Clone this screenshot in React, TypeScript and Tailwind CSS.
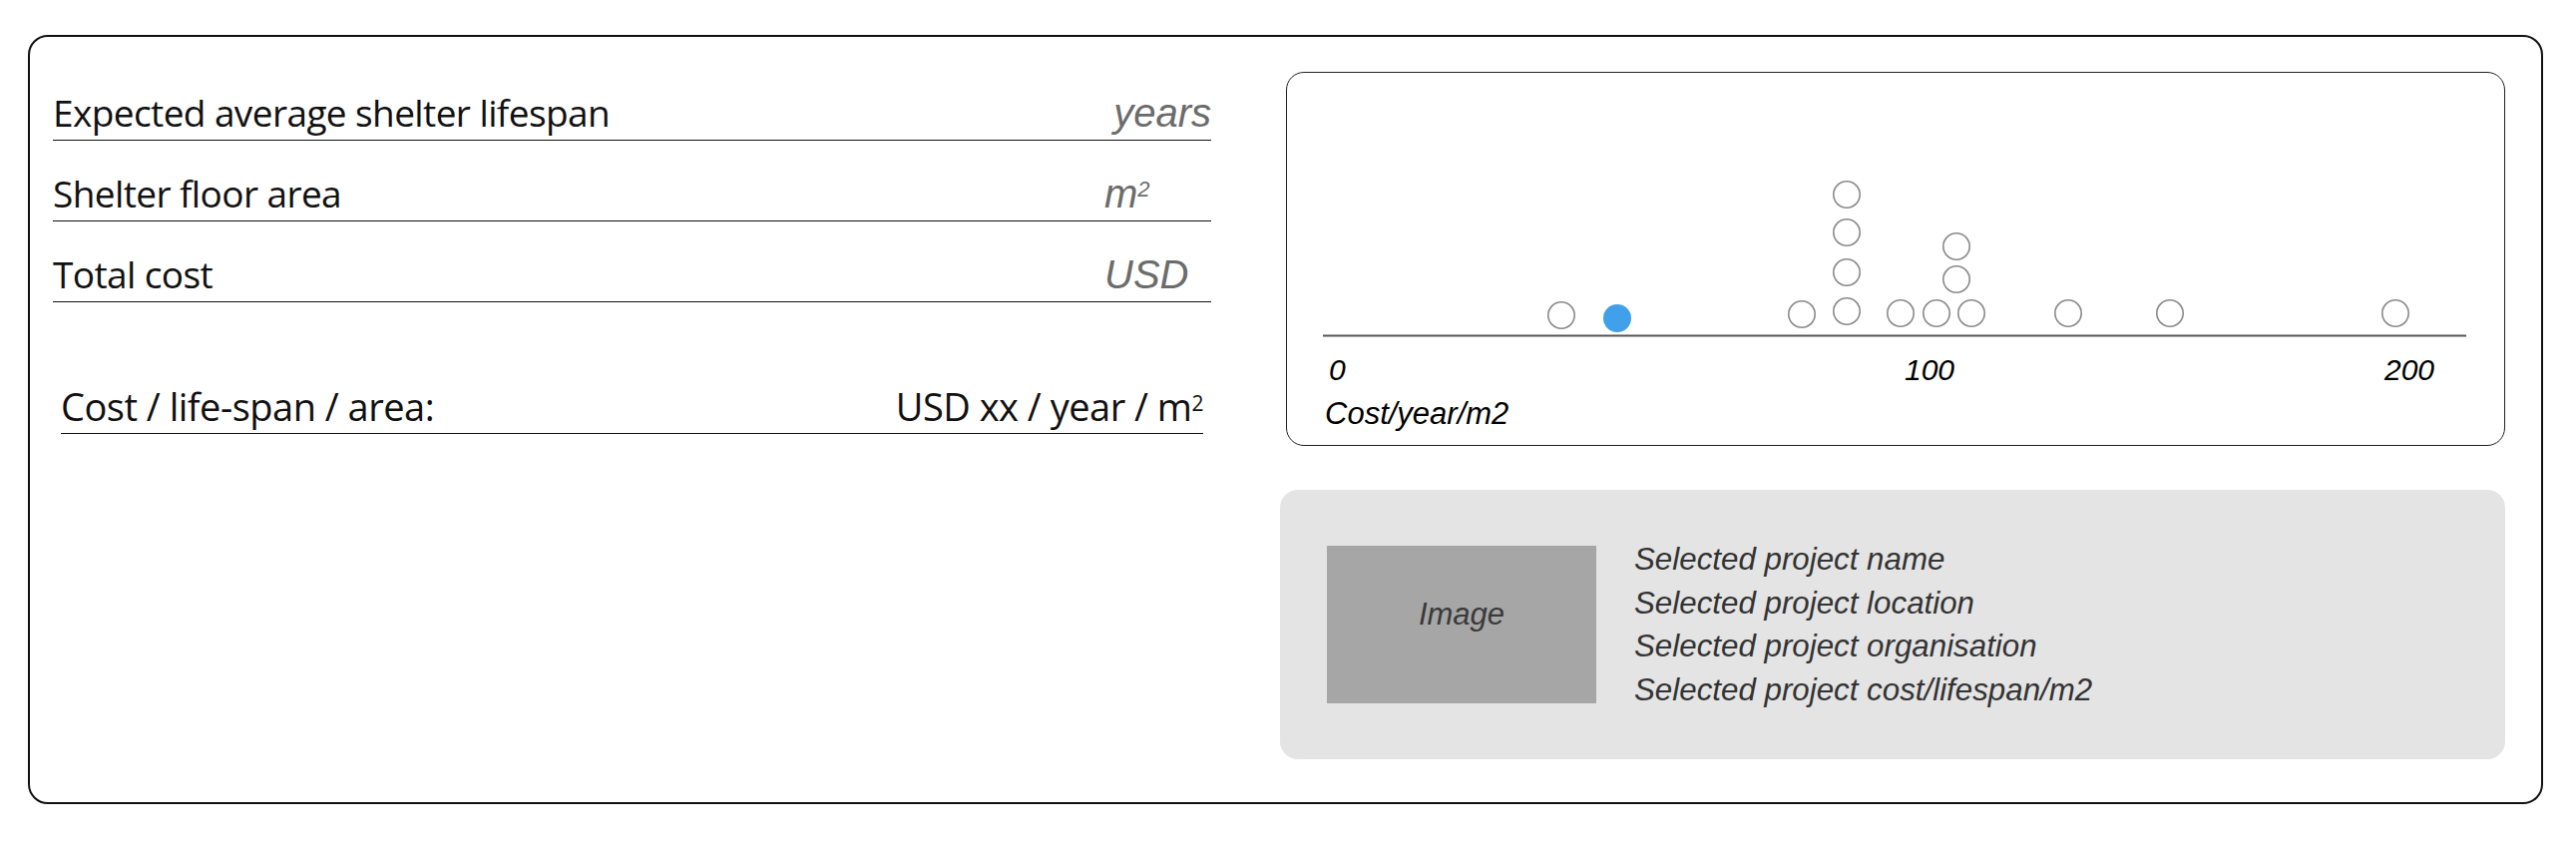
const inputs = [
  { label: "Expected average shelter lifespan", unit: "years" },
  { label: "Shelter floor area", unit: "m2" },
  { label: "Total cost", unit: "USD" },
];

// chart coordinates, relative to the chart box
const dots = [
  { x: 276, y: 244 },
  { x: 517, y: 243 },
  { x: 562, y: 240 },
  { x: 562, y: 201 },
  { x: 562, y: 161 },
  { x: 562, y: 123 },
  { x: 616, y: 242 },
  { x: 652, y: 242 },
  { x: 687, y: 242 },
  { x: 672, y: 208 },
  { x: 672, y: 175 },
  { x: 784, y: 242 },
  { x: 886, y: 242 },
  { x: 1112, y: 242 },
];
const selected = { x: 332, y: 247 };

const details = [
  "Selected project name",
  "Selected project location",
  "Selected project organisation",
  "Selected project cost/lifespan/m2",
];

function Unit({ unit }: { unit: string }) {
  if (unit === "m2") {
    return (
      <>
        m<sup className="text-[0.55em]">2</sup>
      </>
    );
  }
  return <>{unit}</>;
}

function InputRow({ label, unit }: { label: string; unit: string }) {
  return (
    <div className="h-[81px] flex items-end border-b border-[#111] pb-[7px]">
      <div className="flex items-baseline w-full">
        <span className="flex-1 font-['Open_Sans',sans-serif] text-[37px] leading-none tracking-[-0.6px] text-[#111]">
          {label}
        </span>
        <span
          className={`w-[107px] font-['Liberation_Sans',Arial,sans-serif] italic text-[40px] leading-none text-[#6b6b6b] ${
            unit === "years" ? "text-right" : "text-left"
          }`}
        >
          <Unit unit={unit} />
        </span>
      </div>
    </div>
  );
}

function Chart() {
  return (
    <div className="relative ml-[6px] w-[1222px] h-[375px] border border-[#222] rounded-[18px]">
      <svg className="absolute left-0 top-0" width="1220" height="373" viewBox="1 1 1220 373">
        <line x1="37" y1="264.5" x2="1183" y2="264.5" stroke="#555" strokeWidth="2" />
        {dots.map((d, i) => (
          <circle key={i} cx={d.x} cy={d.y} r="13.2" fill="white" stroke="#8a8a8a" strokeWidth="1.6" />
        ))}
        <circle cx={selected.x} cy={selected.y} r="14" fill="#41a0ea" />
      </svg>
      <span className="absolute left-[42px] top-[283px] font-['Liberation_Sans',Arial,sans-serif] italic text-[30px] leading-none text-black">
        0
      </span>
      <span className="absolute left-[619px] top-[283px] font-['Liberation_Sans',Arial,sans-serif] italic text-[30px] leading-none text-black">
        100
      </span>
      <span className="absolute left-[1100px] top-[283px] font-['Liberation_Sans',Arial,sans-serif] italic text-[30px] leading-none text-black">
        200
      </span>
      <span className="absolute left-[38px] top-[326px] font-['Liberation_Sans',Arial,sans-serif] italic text-[31px] leading-none text-black">
        Cost/year/m2
      </span>
    </div>
  );
}

function SelectedProject() {
  return (
    <div className="mt-[44px] w-[1228px] h-[270px] rounded-[18px] bg-[#e4e4e4] flex items-center pl-[47px] font-['Liberation_Sans',Arial,sans-serif] italic text-[#333]">
      <div className="w-[270px] h-[158px] bg-[#a6a6a6] flex items-center justify-center pb-[20px] text-[31px] text-[#3a3a3a]">
        Image
      </div>
      <div className="ml-[38px] text-[31.3px] leading-[43.5px]">
        {details.map((d) => (
          <div key={d}>{d}</div>
        ))}
      </div>
    </div>
  );
}

export default function App() {
  return (
    <div className="w-[2582px] h-[858px] bg-white pt-[35px] pl-[28px]">
      <div className="w-[2521px] h-[771px] border-2 border-[#111] rounded-[20px] flex items-start">
        {/* inputs */}
        <div className="ml-[23px] mt-[23px] w-[1161px] flex flex-col">
          {inputs.map((r) => (
            <InputRow key={r.label} label={r.label} unit={r.unit} />
          ))}
          <div className="mt-[50px] mx-[8px] h-[82px] flex items-end justify-between border-b border-[#111] pb-[8px] font-['Open_Sans',sans-serif] text-[38px] leading-none tracking-[-0.5px] text-[#111]">
            <span>Cost / life-span / area:</span>
            <span>
              USD xx / year / m<sup className="text-[0.55em]">2</sup>
            </span>
          </div>
        </div>

        {/* chart + selection */}
        <div className="ml-[69px] mt-[35px] w-[1228px] flex flex-col">
          <Chart />
          <SelectedProject />
        </div>
      </div>
    </div>
  );
}
